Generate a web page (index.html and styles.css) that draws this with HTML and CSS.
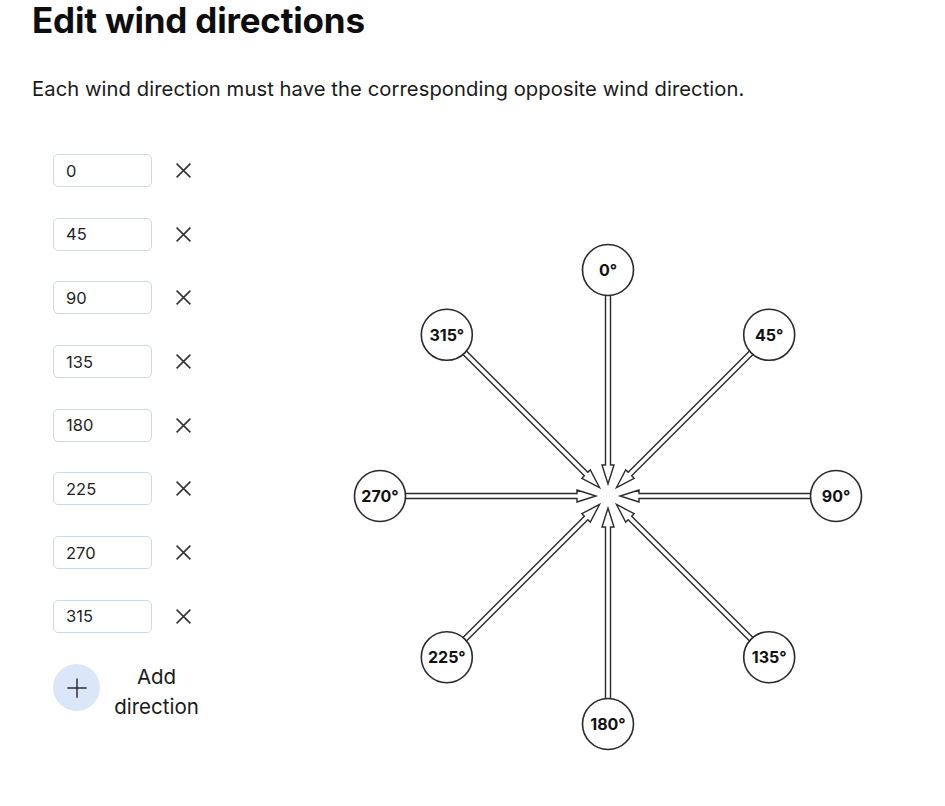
FILE: index.html
```html
<!DOCTYPE html>
<html lang="en">
<head>
<meta charset="utf-8">
<title>Edit wind directions</title>
<link rel="stylesheet" href="styles.css">
</head>
<body>
<main class="page">
  <h1 class="title">Edit wind directions</h1>
  <p class="subtitle">Each wind direction must have the corresponding opposite wind direction.</p>
  <div class="content">
    <div class="list">
      <div class="row"><input class="field" type="text" value="0"><button class="remove" aria-label="Remove"><svg viewBox="0 0 16 16" width="16" height="16"><path d="M1.5 1.5 14.5 14.5M14.5 1.5 1.5 14.5"/></svg></button></div>
      <div class="row"><input class="field" type="text" value="45"><button class="remove" aria-label="Remove"><svg viewBox="0 0 16 16" width="16" height="16"><path d="M1.5 1.5 14.5 14.5M14.5 1.5 1.5 14.5"/></svg></button></div>
      <div class="row"><input class="field" type="text" value="90"><button class="remove" aria-label="Remove"><svg viewBox="0 0 16 16" width="16" height="16"><path d="M1.5 1.5 14.5 14.5M14.5 1.5 1.5 14.5"/></svg></button></div>
      <div class="row"><input class="field" type="text" value="135"><button class="remove" aria-label="Remove"><svg viewBox="0 0 16 16" width="16" height="16"><path d="M1.5 1.5 14.5 14.5M14.5 1.5 1.5 14.5"/></svg></button></div>
      <div class="row"><input class="field" type="text" value="180"><button class="remove" aria-label="Remove"><svg viewBox="0 0 16 16" width="16" height="16"><path d="M1.5 1.5 14.5 14.5M14.5 1.5 1.5 14.5"/></svg></button></div>
      <div class="row"><input class="field" type="text" value="225"><button class="remove" aria-label="Remove"><svg viewBox="0 0 16 16" width="16" height="16"><path d="M1.5 1.5 14.5 14.5M14.5 1.5 1.5 14.5"/></svg></button></div>
      <div class="row"><input class="field" type="text" value="270"><button class="remove" aria-label="Remove"><svg viewBox="0 0 16 16" width="16" height="16"><path d="M1.5 1.5 14.5 14.5M14.5 1.5 1.5 14.5"/></svg></button></div>
      <div class="row"><input class="field" type="text" value="315"><button class="remove" aria-label="Remove"><svg viewBox="0 0 16 16" width="16" height="16"><path d="M1.5 1.5 14.5 14.5M14.5 1.5 1.5 14.5"/></svg></button></div>
      <div class="add">
        <span class="add-btn"><svg viewBox="0 0 24 24" width="22" height="22"><path d="M12 1.5V22.5M1.5 12H22.5"/></svg></span>
        <span class="add-label">Add direction</span>
      </div>
    </div>
    <svg class="rose" viewBox="0 0 520 520" width="520" height="520">
      <g class="arrows">
        <polygon transform="rotate(0 260 260)" points="257.5,45 257.5,229 254,229 260,248 266,229 262.5,229 262.5,45"/>
        <polygon transform="rotate(45 260 260)" points="257.5,45 257.5,229 254,229 260,248 266,229 262.5,229 262.5,45"/>
        <polygon transform="rotate(90 260 260)" points="257.5,45 257.5,229 254,229 260,248 266,229 262.5,229 262.5,45"/>
        <polygon transform="rotate(135 260 260)" points="257.5,45 257.5,229 254,229 260,248 266,229 262.5,229 262.5,45"/>
        <polygon transform="rotate(180 260 260)" points="257.5,45 257.5,229 254,229 260,248 266,229 262.5,229 262.5,45"/>
        <polygon transform="rotate(225 260 260)" points="257.5,45 257.5,229 254,229 260,248 266,229 262.5,229 262.5,45"/>
        <polygon transform="rotate(270 260 260)" points="257.5,45 257.5,229 254,229 260,248 266,229 262.5,229 262.5,45"/>
        <polygon transform="rotate(315 260 260)" points="257.5,45 257.5,229 254,229 260,248 266,229 262.5,229 262.5,45"/>
      </g>
      <g class="labels">
        <circle cx="260" cy="34" r="25.5"/><text x="260" y="34">0°</text>
        <circle cx="421.2" cy="98.8" r="25.5"/><text x="421.2" y="98.8">45°</text>
        <circle cx="488" cy="260" r="25.5"/><text x="488" y="260">90°</text>
        <circle cx="421.2" cy="421.2" r="25.5"/><text x="421.2" y="421.2">135°</text>
        <circle cx="260" cy="488" r="25.5"/><text x="260" y="488">180°</text>
        <circle cx="98.8" cy="421.2" r="25.5"/><text x="98.8" y="421.2">225°</text>
        <circle cx="32" cy="260" r="25.5"/><text x="32" y="260">270°</text>
        <circle cx="98.8" cy="98.8" r="25.5"/><text x="98.8" y="98.8">315°</text>
      </g>
    </svg>
  </div>
</main>
</body>
</html>
```

FILE: styles.css
```css
* { box-sizing: border-box; }

html, body {
  margin: 0;
  padding: 0;
  background: #ffffff;
}

body {
  font-family: Inter, "Noto Sans", "Liberation Sans", sans-serif;
  color: #111111;
}

.page {
  padding: 0 0 0 32px;
}

.title {
  margin: 0;
  font-size: 35px;
  line-height: 40px;
  font-weight: 700;
  letter-spacing: -0.2px;
  color: #0d0d0d;
}

.subtitle {
  margin: 37px 0 0 0;
  font-size: 20.2px;
  letter-spacing: 0.08px;
  line-height: 24px;
  color: #1a1a1a;
}

.content {
  display: flex;
  align-items: flex-start;
  margin-top: 53px;
}

.list {
  display: flex;
  flex-direction: column;
  gap: 30.7px;
  margin-left: 21px;
  width: 150px;
  flex-shrink: 0;
}

.row {
  display: flex;
  align-items: center;
  height: 33px;
}

.field {
  width: 99px;
  height: 33px;
  border: 1px solid #cfd8e3;
  border-radius: 5px;
  padding: 0 12px;
  font-family: inherit;
  font-size: 16.5px;
  color: #1f1f1f;
  background: #fff;
  outline: none;
}

.remove {
  margin-left: 23px;
  padding: 0;
  border: 0;
  background: none;
  width: 17px;
  height: 17px;
  display: flex;
}

.remove svg {
  width: 17px;
  height: 17px;
}

.remove svg path {
  stroke: #333333;
  stroke-width: 1.5;
  fill: none;
}

.add {
  display: flex;
  align-items: center;
  margin-top: -2px;
}

.add-btn {
  width: 47px;
  height: 47px;
  border-radius: 50%;
  background: #dbe6f8;
  display: flex;
  align-items: center;
  justify-content: center;
  flex-shrink: 0;
  margin-top: -8px;
}

.add-btn svg path {
  stroke: #2a2a2a;
  stroke-width: 1.6;
  fill: none;
}

.add-label {
  width: 98px;
  margin-left: 10px;
  text-align: center;
  font-size: 20.5px;
  line-height: 30px;
  color: #1a1a1a;
}

.rose {
  margin-left: 145px;
  margin-top: 82px;
  flex-shrink: 0;
  overflow: visible;
}

.arrows polygon {
  fill: #ffffff;
  stroke: #2a2a2a;
  stroke-width: 1.4;
  stroke-linejoin: miter;
}

.labels circle {
  fill: #ffffff;
  stroke: #2a2a2a;
  stroke-width: 1.6;
}

.labels text {
  font-family: Inter, "Noto Sans", "Liberation Sans", sans-serif;
  font-size: 16px;
  font-weight: 700;
  fill: #111111;
  text-anchor: middle;
  dominant-baseline: central;
}
```
